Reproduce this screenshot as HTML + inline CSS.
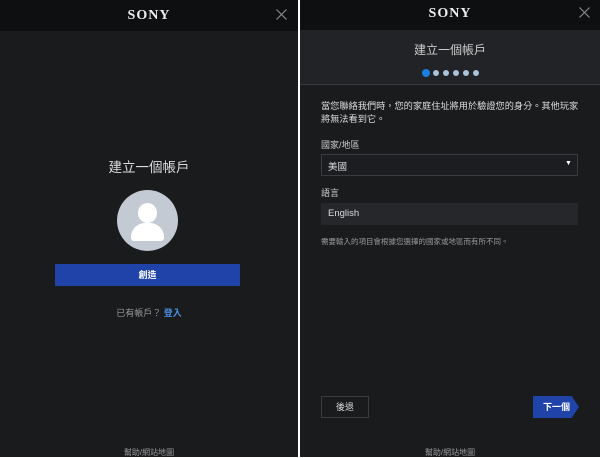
<!DOCTYPE html>
<html><head><meta charset="utf-8"><style>
*{margin:0;padding:0;box-sizing:border-box}
body{width:600px;height:457px;background:#fff;font-family:"Liberation Sans","Noto Sans CJK TC",sans-serif;position:relative;overflow:hidden;color:#ddd}
.p{position:absolute;top:0;height:457px;background:#1a1b1d}
.hd{position:absolute;left:0;right:0;top:0;height:31px;background:#0e0f10}
.sony{position:absolute;top:8px;width:100%;text-align:center;font-family:"Liberation Serif",serif;font-weight:bold;font-size:14px;letter-spacing:1px;color:#eee}
.x{position:absolute;top:9px}
.t{position:absolute;font-size:10px;white-space:nowrap}
</style></head><body>
<div class="p" style="left:0;width:298px">
 <div class="hd"><div class="sony">SONY</div><svg class="x" style="left:276px" width="11" height="11"><path d="M0.5 0.5L10.5 10.5M10.5 0.5L0.5 10.5" stroke="#888" stroke-width="1.2"/></svg></div>
 <div class="t" style="left:0;width:298px;text-align:center;top:156px;font-size:13.5px;color:#ddd">建立一個帳戶</div>
 <div style="position:absolute;left:117px;top:190px;width:61px;height:61px;border-radius:50%;background:#c4cad3;overflow:hidden">
  <div style="position:absolute;left:21px;top:13px;width:19px;height:20px;border-radius:50%;background:#fff"></div>
  <div style="position:absolute;left:14px;top:33px;width:33px;height:18px;border-radius:14px 14px 3px 3px;background:#fff"></div>
 </div>
 <div style="position:absolute;left:55px;top:264px;width:185px;height:22px;background:#1f43a8;color:#fff;font-size:9px;text-align:center;line-height:22px;font-weight:bold">創造</div>
 <div class="t" style="left:0;width:298px;text-align:center;top:306px;font-size:9px;color:#999">已有帳戶？ <b style="color:#4a8ee0">登入</b></div>
 <div class="t" style="left:0;width:298px;text-align:center;top:447px;font-size:8px;color:#999">幫助/網站地圖</div>
</div>
<div class="p" style="left:300px;width:300px">
 <div class="hd" style="height:30px"><div class="sony" style="top:6px">SONY</div><svg class="x" style="left:279px;top:7px" width="11" height="11"><path d="M0.5 0.5L10.5 10.5M10.5 0.5L0.5 10.5" stroke="#888" stroke-width="1.2"/></svg></div>
 <div style="position:absolute;left:0;right:0;top:30px;height:55px;background:#212326;border-bottom:1px solid #3a3c40"></div>
 <div class="t" style="left:0;width:300px;text-align:center;top:41px;font-size:12px;color:#ccc">建立一個帳戶</div>
 <div style="position:absolute;left:122px;top:69px;width:8px;height:8px;border-radius:50%;background:#1b7ee0"></div>
 <div style="position:absolute;left:133px;top:70px;display:flex;gap:4px">
  <i style="width:6px;height:6px;border-radius:50%;background:#a9c3dc"></i><i style="width:6px;height:6px;border-radius:50%;background:#a9c3dc"></i><i style="width:6px;height:6px;border-radius:50%;background:#a9c3dc"></i><i style="width:6px;height:6px;border-radius:50%;background:#a9c3dc"></i><i style="width:6px;height:6px;border-radius:50%;background:#a9c3dc"></i></div>
 <div class="t" style="left:21px;top:100px;font-size:9.2px;line-height:13px;color:#ddd">當您聯絡我們時，您的家庭住址將用於驗證您的身分。其他玩家<br>將無法看到它。</div>
 <div class="t" style="left:21px;top:138px;font-size:9px;color:#ccc">國家/地區</div>
 <div style="position:absolute;left:21px;top:154px;width:257px;height:22px;border:1px solid #3a3c40;background:#1c1d20"></div>
 <div class="t" style="left:28px;top:159px;font-size:9.5px;color:#ddd">美國</div>
 <div class="t" style="left:265px;top:160px;font-size:7px;color:#fff">▼</div>
 <div class="t" style="left:21px;top:186px;font-size:9px;color:#ccc">語言</div>
 <div style="position:absolute;left:21px;top:203px;width:257px;height:22px;background:#25272a"></div>
 <div class="t" style="left:28px;top:208px;font-size:9.5px;color:#ddd">English</div>
 <div class="t" style="left:21px;top:236px;font-size:7.5px;color:#999">需要輸入的項目會根據您選擇的國家或地區而有所不同。</div>
 <div style="position:absolute;left:21px;top:396px;width:48px;height:22px;border:1px solid #3a3c40;color:#ddd;font-size:9px;text-align:center;line-height:20px">後退</div>
 <div style="position:absolute;left:233px;top:396px;width:46px;height:22px;background:#1f43a8;clip-path:polygon(0 0,84% 0,100% 50%,84% 100%,0 100%);color:#fff;font-size:9px;line-height:22px;padding-left:10px;font-weight:bold">下一個</div>
 <div class="t" style="left:0;width:300px;text-align:center;top:447px;font-size:8px;color:#999">幫助/網站地圖</div>
</div>
</body></html>
